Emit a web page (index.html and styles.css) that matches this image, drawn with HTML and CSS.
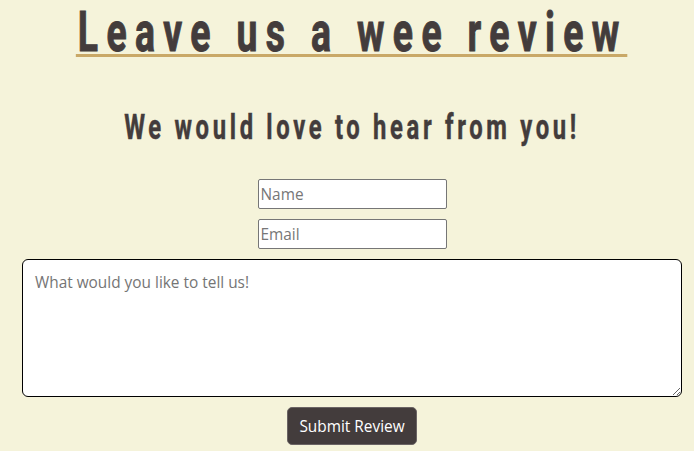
FILE: index.html
```html
<!DOCTYPE html>
<html>
<head>
<meta charset="utf-8">
<link rel="stylesheet" href="styles.css">
</head>
<body>
<main class="page">
  <h1 class="title"><span class="title-text">Leave us a wee review</span></h1>
  <h2 class="subtitle"><span class="subtitle-text">We would love to hear from you!</span></h2>
  <form class="form">
    <input class="field" type="text" placeholder="Name">
    <input class="field" type="email" placeholder="Email">
    <textarea class="message" placeholder="What would you like to tell us!"></textarea>
    <button class="submit" type="button">Submit Review</button>
  </form>
</main>
</body>
</html>
```
FILE: styles.css
```css
html, body {
  margin: 0;
  padding: 0;
  background: #f5f3da;
}
.page {
  display: flex;
  flex-direction: column;
  align-items: center;
  padding: 10px 0 0 10px;
  overflow: hidden;
  font-family: "Open Sans", "Noto Sans", sans-serif;
  color: #433c3c;
}
.title {
  margin: 0;
  font-family: Roboto, "Liberation Sans", sans-serif;
  font-weight: bold;
  font-size: 55px;
  line-height: 44px;
  letter-spacing: 12.3px;
  color: #433c3c;
  -webkit-text-stroke: 1px #433c3c;
  white-space: nowrap;
}
.title-text {
  display: inline-block;
  margin: 0 -129px;
  border-bottom: 3px solid #c9a867;
  padding-left: 3px;
  transform: scaleX(0.68);
}
.subtitle {
  margin: 51px 0 0;
  font-family: Roboto, "Liberation Sans", sans-serif;
  font-weight: bold;
  font-size: 35px;
  line-height: 40px;
  letter-spacing: 5.4px;
  color: #433c3c;
  -webkit-text-stroke: 0.5px #433c3c;
  white-space: nowrap;
}
.subtitle-text {
  display: inline-block;
  transform: scaleX(0.68);
}
.form {
  display: flex;
  flex-direction: column;
  align-items: center;
  margin-top: 31px;
  width: 100%;
}
.field {
  box-sizing: border-box;
  width: 189px;
  height: 30px;
  margin: 0 0 10px;
  padding: 0 2px;
  border: 1px solid #767676;
  border-radius: 2px;
  background: #fff;
  font-family: "Open Sans", sans-serif;
  font-size: 15.4px;
  color: #333;
}
.field::placeholder { color: #777; }
.message {
  box-sizing: border-box;
  width: 660px;
  height: 138px;
  margin: 0 0 10px;
  padding: 12px 12px;
  border: 1px solid #000;
  border-radius: 6px;
  background: #fff;
  font-family: "Open Sans", sans-serif;
  font-size: 15.4px;
  resize: vertical;
}
.message::placeholder { color: #757575; }
.submit {
  box-sizing: border-box;
  width: 130px;
  height: 38px;
  border: 1px solid #6b6464;
  border-radius: 5px;
  background: #433c3c;
  color: #fff;
  font-family: "Open Sans", sans-serif;
  font-size: 15.4px;
}
```
